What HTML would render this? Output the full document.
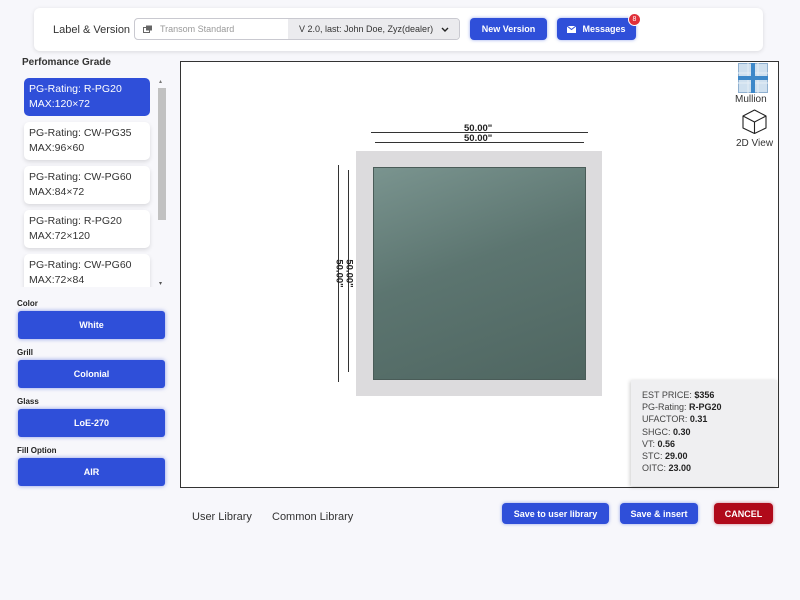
<!DOCTYPE html>
<html><head><style>
*{box-sizing:border-box;margin:0;padding:0}
body{width:800px;height:600px;background:#f7f7fb;font-family:"Liberation Sans",sans-serif;position:relative;overflow:hidden;color:#222}
.a{position:absolute}
.btn{position:absolute;background:#2f4fd9;color:#fff;border-radius:4px;font-size:9px;font-weight:bold;display:flex;align-items:center;justify-content:center;box-shadow:0 0 3px rgba(47,79,217,.5)}
.item{position:absolute;left:24px;width:126px;height:38px;background:#fff;border-radius:5px;box-shadow:0 2px 4px rgba(0,0,0,.12);font-family:"Liberation Sans",sans-serif;font-size:10.5px;line-height:14.5px;padding:4px 5px;color:#333}
.lbl{position:absolute;left:17px;font-size:8px;font-weight:bold;color:#222}
.sel{position:absolute;left:18px;width:147px;height:28px;background:#2f4fd9;color:#fff;border-radius:3px;font-size:9px;font-weight:bold;display:flex;align-items:center;justify-content:center;box-shadow:0 0 4px rgba(47,79,217,.55)}
.info div{font-size:9px;line-height:12.2px;color:#444}
.info b{color:#222}
</style></head><body>
<div class="a" style="left:34px;top:8px;width:729px;height:43px;background:#fff;border-radius:6px;box-shadow:0 1px 4px rgba(0,0,0,.12)"></div>
<div class="a" style="left:53px;top:24px;font-size:11px;color:#333">Label &amp; Version</div>
<div class="a" style="left:134px;top:18px;width:326px;height:22px;border:1px solid #c9c9d0;border-radius:4px;background:#fff;overflow:hidden">
 <div class="a" style="left:153px;top:0;width:173px;height:22px;background:#ebebee"></div>
 <svg class="a" style="left:8px;top:6px" width="10" height="9"><rect x="0.5" y="2.5" width="6" height="5" fill="none" stroke="#666"/><rect x="3" y="0.5" width="6" height="5" fill="#666"/></svg>
 <div class="a" style="left:25px;top:5px;font-size:9px;color:#999">Transom Standard</div>
 <div class="a" style="left:164px;top:5px;font-size:9px;color:#333">V 2.0, last: John Doe, Zyz(dealer)</div>
 <svg class="a" style="left:306px;top:8px" width="8" height="6"><path d="M1 1l3 3 3-3" fill="none" stroke="#222" stroke-width="1.4"/></svg>
</div>
<div class="btn" style="left:470px;top:18px;width:77px;height:22px">New Version</div>
<div class="btn" style="left:557px;top:18px;width:79px;height:22px"><svg width="9" height="7" style="margin-right:6px"><rect width="9" height="7" fill="#fff"/><path d="M0 0l4.5 3.5L9 0" stroke="#2f4fd9" fill="none"/></svg>Messages</div>
<div class="a" style="left:628px;top:13px;width:13px;height:13px;border-radius:50%;background:#e0303a;color:#fff;font-size:7px;display:flex;align-items:center;justify-content:center;border:1px solid #fff">8</div>

<div class="a" style="left:22px;top:57px;font-size:10px;font-weight:bold;color:#333">Perfomance Grade</div>
<div class="item" style="top:78px;background:#2f4fd9;color:#fff;box-shadow:none">PG-Rating: R-PG20<br>MAX:120×72</div>
<div class="item" style="top:122px">PG-Rating: CW-PG35<br>MAX:96×60</div>
<div class="item" style="top:166px">PG-Rating: CW-PG60<br>MAX:84×72</div>
<div class="item" style="top:210px">PG-Rating: R-PG20<br>MAX:72×120</div>
<div class="a" style="left:20px;top:254px;width:140px;height:33px;overflow:hidden"><div class="item" style="top:0;left:4px">PG-Rating: CW-PG60<br>MAX:72×84</div></div>
<div class="a" style="left:158px;top:88px;width:8px;height:132px;background:#c1c1c1"></div>
<div class="a" style="left:159px;top:78px;font-size:6px;color:#777">▴</div>
<div class="a" style="left:159px;top:280px;font-size:6px;color:#555">▾</div>

<div class="lbl" style="top:299px">Color</div><div class="sel" style="top:311px">White</div>
<div class="lbl" style="top:348px">Grill</div><div class="sel" style="top:360px">Colonial</div>
<div class="lbl" style="top:397px">Glass</div><div class="sel" style="top:409px">LoE-270</div>
<div class="lbl" style="top:446px">Fill Option</div><div class="sel" style="top:458px">AIR</div>

<div class="a" style="left:180px;top:61px;width:599px;height:427px;background:#fff;border:1.5px solid #333"></div>
<div class="a" style="left:371px;top:132px;width:217px;height:1px;background:#333"></div>
<div class="a" style="left:375px;top:142px;width:209px;height:1px;background:#333"></div>
<div class="a" style="left:464px;top:123px;font-size:9.5px;font-weight:bold">50.00"</div>
<div class="a" style="left:464px;top:133px;font-size:9.5px;font-weight:bold">50.00"</div>
<div class="a" style="left:338px;top:165px;width:1px;height:217px;background:#333"></div>
<div class="a" style="left:348px;top:170px;width:1px;height:202px;background:#333"></div>
<div class="a" style="left:325px;top:268px;font-size:9.5px;font-weight:bold;transform:rotate(90deg)">50.00"</div>
<div class="a" style="left:335px;top:268px;font-size:9.5px;font-weight:bold;transform:rotate(90deg)">50.00"</div>
<div class="a" style="left:356px;top:151px;width:246px;height:245px;background:#dcdbdd"></div>
<div class="a" style="left:373px;top:167px;width:213px;height:213px;background:linear-gradient(160deg,#7a948f 0%,#5c7570 45%,#4f6661 100%);border:1px solid #4a5c58"></div>

<svg class="a" style="left:738px;top:63px" width="30" height="30"><rect x="0.5" y="0.5" width="29" height="29" fill="#cfe0ef" stroke="#8fb0d0"/><path d="M0 10h30M0 20h30M10 0v30M20 0v30" stroke="#e6eef6" stroke-width="1"/><rect x="13" y="0" width="4" height="30" fill="#3d88c9"/><rect x="0" y="13" width="30" height="4" fill="#3d88c9"/></svg>
<div class="a" style="left:735px;top:94px;font-size:10px;color:#333">Mullion</div>
<svg class="a" style="left:742px;top:109px" width="25" height="25"><path d="M12.5 1L24 7v12l-11.5 5.5L1 19V7zM1 7l11.5 6L24 7M12.5 13v11.5" fill="none" stroke="#222" stroke-width="1.1" stroke-linejoin="round"/></svg>
<div class="a" style="left:736px;top:138px;font-size:10px;color:#333">2D View</div>

<div class="a info" style="left:631px;top:380px;width:146px;height:106px;background:#efeff1;box-shadow:-1px 1px 4px rgba(0,0,0,.2);padding:9px 0 0 11px">
<div>EST PRICE: <b>$356</b></div><div>PG-Rating: <b>R-PG20</b></div><div>UFACTOR: <b>0.31</b></div><div>SHGC: <b>0.30</b></div><div>VT: <b>0.56</b></div><div>STC: <b>29.00</b></div><div>OITC: <b>23.00</b></div>
</div>

<div class="a" style="left:192px;top:511px;font-size:11px;color:#333">User Library</div>
<div class="a" style="left:272px;top:511px;font-size:11px;color:#333">Common Library</div>
<div class="btn" style="left:502px;top:503px;width:107px;height:21px">Save to user library</div>
<div class="btn" style="left:620px;top:503px;width:78px;height:21px">Save &amp; insert</div>
<div class="btn" style="left:714px;top:503px;width:59px;height:21px;background:#b00a1a;box-shadow:0 0 3px rgba(176,10,26,.5)">CANCEL</div>
</body></html>
